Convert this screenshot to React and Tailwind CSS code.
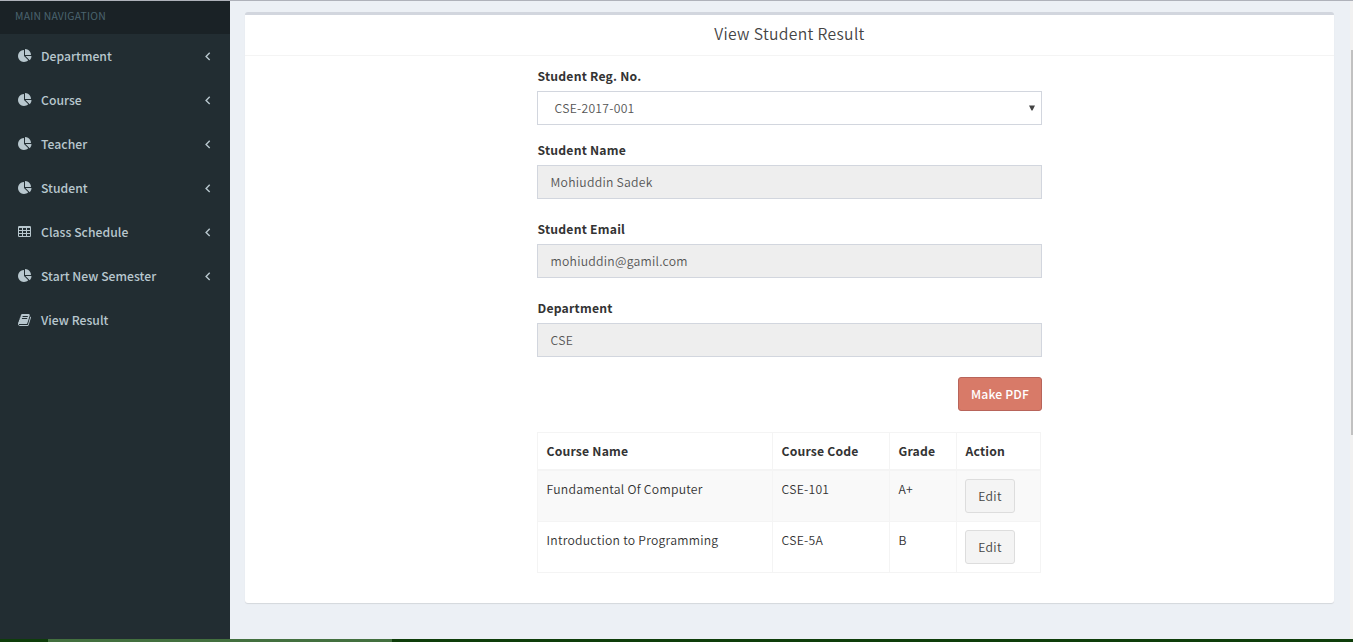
import React from "react";

const PIE =
  "M768 890l546 546q-106 108-247.5 168t-298.5 60q-209 0-385.5-103t-279.5-279.500-103-385.500 103-385.500 279.500-279.500 385.500-103v762zm187 6h773q0 157-60 298.500t-168 247.500zm709-128h-768v-768q209 0 385.500 103t279.500 279.500 103 385.500z";
const BOOK =
  "M1703 478q40 57 18 129l-275 906q-19 64-76.500 107.500t-122.500 43.500h-923q-77 0-148.500-53.500t-99.500-131.500q-24-67-2-127 0-4 3-27t4-37q1-8-3-21.500t-3-19.500q2-11 8-21t16.500-23.500 16.500-23.500q23-38 45-91.500t30-91.500q3-10 .5-30t-.5-28q3-11 17-28t17-23q21-36 42-92t25-90q1-9-2.500-32t.5-28q4-13 22-30.500t22-22.500q19-26 42.500-84.500t27.500-96.500q1-8-3-25.500t-2-26.500q2-8 9-18t18-23 17-21q8-12 16.500-30.500t15-35 16-36 19.500-32 26.500-23.500 36-11.500 47.500 5.500l-1 3q38-9 51-9h761q74 0 114 56t18 130l-274 906q-36 119-71.500 153.500t-128.500 34.500h-869q-27 0-38 15-11 16-1 43 24 70 144 70h923q29 0 56-15.500t35-41.500l300-987q7-22 5-57 38 15 59 43zm-1064 2q-4 13 2 22.500t20 9.500h608q13 0 25.500-9.500t16.500-22.500l21-64q4-13-2-22.500t-20-9.500h-608q-13 0-25.500 9.500t-16.500 22.500zm-83 256q-4 13 2 22.500t20 9.500h608q13 0 25.500-9.500t16.500-22.500l21-64q4-13-2-22.500t-20-9.500h-608q-13 0-25.500 9.500t-16.500 22.500z";
const cells = [1152, 768, 384]
  .flatMap((y) => [192, 704, 1216].map((x) => `M${x} ${y}h384v256h-384z`))
  .join("");
const TABLE =
  "M224 128h1344a160 160 0 0 1 160 160v1088a160 160 0 0 1-160 160h-1344a160 160 0 0 1-160-160v-1088a160 160 0 0 1 160-160z" +
  cells;

const icons = {
  pie: { path: PIE, viewBox: "0 0 1792 1792" },
  book: { path: BOOK, viewBox: "64 0 1792 1792" },
  table: { path: TABLE, viewBox: "64 0 1792 1792" },
};

const nav = [
  ["Department", "pie", true],
  ["Course", "pie", true],
  ["Teacher", "pie", true],
  ["Student", "pie", true],
  ["Class Schedule", "table", true],
  ["Start New Semester", "pie", true],
  ["View Result", "book", false],
];

function NavItem({ label, icon, arrow }) {
  return (
    <a className="flex h-11 items-center pr-[19px] pl-[18px]">
      <svg viewBox={icons[icon].viewBox} className="mb-px h-3.5 w-3.5" fill="#b8c7ce" fillRule="evenodd">
        <path d={icons[icon].path} />
      </svg>
      <span className="ml-[9px] flex-1 font-medium tracking-[0.03px]">{label}</span>
      {arrow && (
        <svg viewBox="0 0 6 9" className="mt-px h-[9px] w-1.5" fill="none" stroke="#b8c7ce" strokeWidth="1.4">
          <path d="M4.700 0.8L1.100 4.400L4.700 8" />
        </svg>
      )}
    </a>
  );
}

function Label({ children }) {
  return <label className="mb-[5px] block h-5 pl-[0.5px] font-bold leading-5 tracking-[0.22px]">{children}</label>;
}

function Field({ label, value }) {
  return (
    <div>
      <Label>{label}</Label>
      <div className="flex h-[34px] items-center border border-[#d2d6de] bg-[#eeeeee] pl-[12.500px] text-[#555555]">
        {value}
      </div>
    </div>
  );
}

const cell = "border border-[#f4f4f4] py-2 pr-2 pl-[8.500px] text-left align-top leading-5";

export default function App() {
  return (
    <div className="flex h-[642px] w-full flex-col overflow-hidden bg-[#ecf0f5] font-['Noto_Sans_CJK_SC','Open_Sans',sans-serif] text-[12.2px] tracking-[0.26px] text-[#333333]">
      <div className="h-px shrink-0 bg-[#afb2ba]" />
      <div className="flex min-h-0 flex-1">
        <aside className="w-[230px] shrink-0 bg-[#222d32] text-[#b8c7ce]">
          <div className="h-[33px] bg-[#1a2226] pt-[5px] pl-[15px] text-[10.4px] leading-5 tracking-[0.22px] text-[#4b646f]">
            MAIN NAVIGATION
          </div>
          <nav>
            {nav.map(([label, icon, arrow]) => (
              <NavItem key={label} label={label} icon={icon} arrow={arrow} />
            ))}
          </nav>
        </aside>
        <main className="flex-1 pt-[11px] pr-4 pl-[15px]">
          <section className="h-[591px] rounded-[3px] border-t-[3px] border-[#d2d6de] bg-white shadow-[0_1px_1px_rgba(0,0,0,0.1)]">
            <h3 className="h-[41px] border-b border-[#f4f4f4] pt-[9px] text-center text-[15.700px] font-[350] leading-5 tracking-[0.34px] text-[#444444]">
              View Student Result
            </h3>
            <div className="ml-[292px] w-[505px] pt-[10px] font-[350]">
              <div className="mb-[15px]">
                <Label>Student Reg. No.</Label>
                <div className="flex h-[34px] items-center justify-between border border-[#d2d6de] bg-white pr-1.5 pl-[16.500px] text-[#555555]">
                  <span>CSE-2017-001</span>
                  <svg viewBox="0 0 6 6" className="mb-px h-1.5 w-1.5" fill="#444444">
                    <path d="M0 0.500H6L3.500 5.500H2.500Z" />
                  </svg>
                </div>
              </div>
              <div className="flex flex-col gap-5">
                <Field label="Student Name" value="Mohiuddin Sadek" />
                <Field label="Student Email" value="mohiuddin@gamil.com" />
                <Field label="Department" value="CSE" />
              </div>
              <div className="mt-5 flex justify-end">
                <button className="h-[34px] w-[84px] rounded-[3px] border border-[#b8645a] bg-[#d87a68] font-medium tracking-[0.13px] text-white">
                  Make PDF
                </button>
              </div>
              <table className="mt-[21px] w-[504px] table-fixed border-collapse">
                <colgroup>
                  <col className="w-[235px]" />
                  <col className="w-[117px]" />
                  <col className="w-[67px]" />
                  <col className="w-[84px]" />
                </colgroup>
                <thead>
                  <tr className="h-[37px]">
                    {["Course Name", "Course Code", "Grade", "Action"].map((h) => (
                      <th key={h} className="border border-b-2 border-[#f4f4f4] pt-2 pr-2 pb-[7px] pl-[8.500px] text-left align-top leading-5 font-bold tracking-[0.19px]">
                        {h}
                      </th>
                    ))}
                  </tr>
                </thead>
                <tbody>
                  {[
                    ["Fundamental Of Computer", "CSE-101", "A+"],
                    ["Introduction to Programming", "CSE-5A", "B"],
                  ].map((row) => (
                    <tr key={row[0]} className="h-[51px] odd:bg-[#f9f9f9]">
                      {row.map((v) => (
                        <td key={v} className={cell}>
                          {v}
                        </td>
                      ))}
                      <td className="border border-[#f4f4f4] p-2 align-top">
                        <button className="block h-[34px] w-[50px] rounded-[3px] border border-[#dddddd] bg-[#f4f4f4] pt-px text-[#444444]">
                          Edit
                        </button>
                      </td>
                    </tr>
                  ))}
                </tbody>
              </table>
            </div>
          </section>
        </main>
        <div className="w-[3px] bg-[#f1f1f1] pt-[49px] pl-px">
          <div className="h-[385px] bg-[#c1c1c1]" />
        </div>
      </div>
      <div className="flex h-[3px] shrink-0 bg-[#0e3d0a]">
        <div className="ml-12 w-[344px] bg-[#43703f]" />
      </div>
    </div>
  );
}
